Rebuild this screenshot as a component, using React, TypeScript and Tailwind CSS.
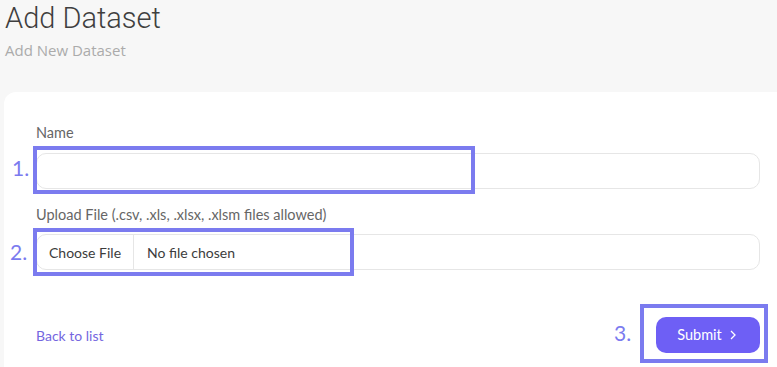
import React from "react";

const body = { fontFamily: "Lato, 'Noto Sans', sans-serif" };
const head = { fontFamily: "Roboto, 'Open Sans', sans-serif" };

export default function App() {
  return (
    <div className="relative w-[777px] h-[367px] overflow-hidden bg-[#f7f7f7] flex flex-col" style={body}>
      <header className="pl-[5px] pt-[2px]">
        <h1 className="text-[29px] leading-[32px] font-light text-[#3f3f3f]" style={head}>
          Add Dataset
        </h1>
        <p className="mt-[7px] text-[15px] leading-[18px] text-[#ababab]" style={{ fontFamily: "'Open Sans', sans-serif" }}>
          Add New Dataset
        </p>
      </header>
      <main className="ml-[4px] mt-[33px] flex-1 bg-white rounded-tl-[12px] pl-[32px] pr-[17px] pt-[33px]">
        <label className="block text-[14.5px] leading-[16px] text-[#666]">Name</label>
        <div className="mt-[12px] h-[36px] rounded-[10px] border border-[#e6e6e6]" />
        <label className="block mt-[18px] text-[14.5px] leading-[16px] text-[#666]">
          Upload File (.csv, .xls, .xlsx, .xlsm files allowed)
        </label>
        <div className="mt-[11px] h-[36px] rounded-[10px] border border-[#e6e6e6] flex items-center text-[14px] text-[#3c3c3c]">
          <span className="pl-[12px] pr-[12px] h-full flex items-center border-r border-[#e6e6e6]">Choose File</span>
          <span className="pl-[13px]">No file chosen</span>
        </div>
        <div className="mt-[48px] flex items-center justify-between">
          <a className="text-[14px] text-[#7466e0]">Back to list</a>
          <button className="w-[104px] h-[36px] rounded-[10px] bg-[#6e5ff5] text-white text-[14.5px] flex items-center justify-center gap-[7px] mt-[-1px] pr-[2px]">
            Submit
            <svg width="8" height="10" viewBox="0 0 8 10" fill="none" stroke="white" strokeWidth="1.3">
              <path d="M2 1l4 4-4 4" />
            </svg>
          </button>
        </div>
      </main>
      {/* annotations overlay */}
      <div className="absolute left-[33px] top-[146px] w-[442px] h-[48px] border-[4px] border-[#7b7bef]" />
      <div className="absolute left-[12px] top-[156px] text-[21px] leading-[24px] text-[#7b7bef]">1.</div>
      <div className="absolute left-[33px] top-[228px] w-[321px] h-[48px] border-[4px] border-[#7b7bef]" />
      <div className="absolute left-[10px] top-[240px] text-[21px] leading-[24px] text-[#7b7bef]">2.</div>
      <div className="absolute left-[640px] top-[304px] w-[128px] h-[59px] border-[4px] border-[#7b7bef]" />
      <div className="absolute left-[614px] top-[321px] text-[21px] leading-[24px] text-[#7b7bef]">3.</div>
    </div>
  );
}
